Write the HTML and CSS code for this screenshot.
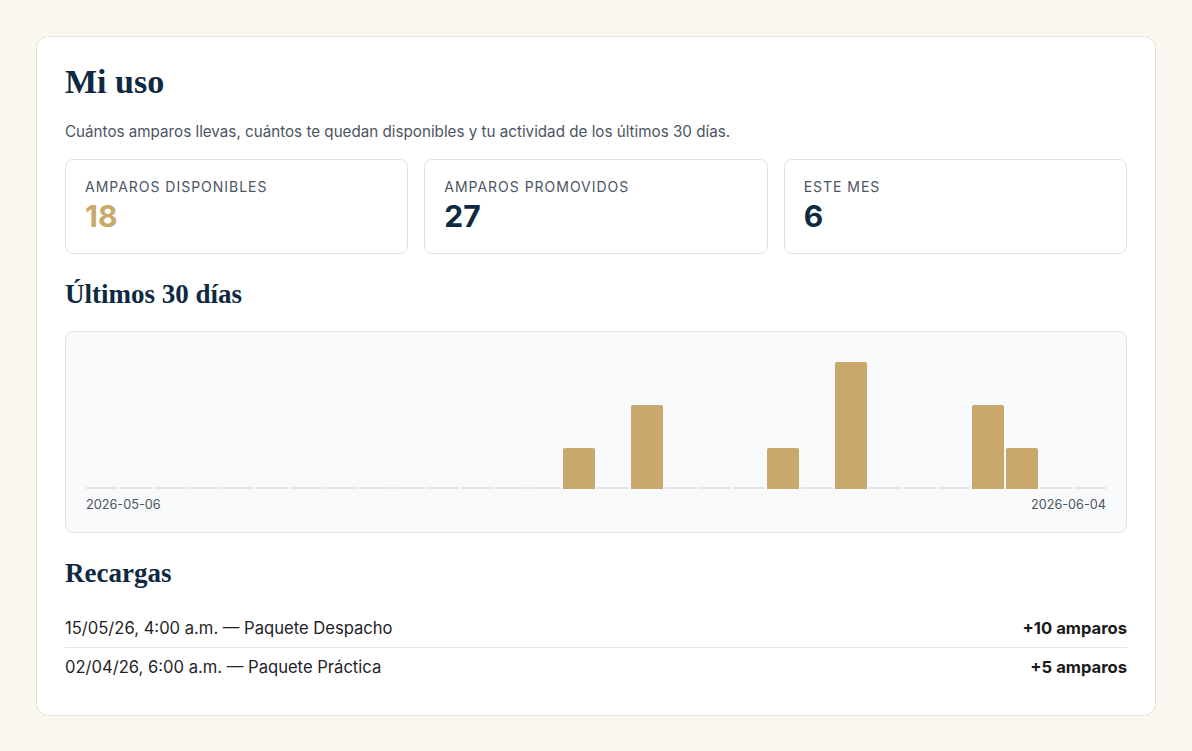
FILE: index.html
```html
<!DOCTYPE html>
<html lang="es">

<head>
    <meta charset="UTF-8">
    <meta name="viewport" content="width=device-width, initial-scale=1.0">
    <title>Mi uso</title>
    <link rel="stylesheet" href="styles.css">
</head>

<body>
    <div class="card">
        <h1>Mi uso</h1>
        <p class="intro">Cuántos amparos llevas, cuántos te quedan disponibles y tu actividad de los últimos 30 días.</p>

        <div class="stats">
            <div class="stat">
                <div class="stat-label">Amparos disponibles</div>
                <div class="stat-value gold">18</div>
            </div>
            <div class="stat">
                <div class="stat-label">Amparos promovidos</div>
                <div class="stat-value">27</div>
            </div>
            <div class="stat">
                <div class="stat-label">Este mes</div>
                <div class="stat-value">6</div>
            </div>
        </div>

        <h2>Últimos 30 días</h2>
        <div class="chart">
            <div class="bars">
                <div class="bar empty"></div>
                <div class="bar empty"></div>
                <div class="bar empty"></div>
                <div class="bar empty"></div>
                <div class="bar empty"></div>
                <div class="bar empty"></div>
                <div class="bar empty"></div>
                <div class="bar empty"></div>
                <div class="bar empty"></div>
                <div class="bar empty"></div>
                <div class="bar empty"></div>
                <div class="bar empty"></div>
                <div class="bar empty"></div>
                <div class="bar empty"></div>
                <div class="bar" style="height: 41px"></div>
                <div class="bar empty"></div>
                <div class="bar" style="height: 84px"></div>
                <div class="bar empty"></div>
                <div class="bar empty"></div>
                <div class="bar empty"></div>
                <div class="bar" style="height: 41px"></div>
                <div class="bar empty"></div>
                <div class="bar" style="height: 127px"></div>
                <div class="bar empty"></div>
                <div class="bar empty"></div>
                <div class="bar empty"></div>
                <div class="bar" style="height: 84px"></div>
                <div class="bar" style="height: 41px"></div>
                <div class="bar empty"></div>
                <div class="bar empty"></div>
            </div>
            <div class="chart-dates">
                <span>2026-05-06</span>
                <span>2026-06-04</span>
            </div>
        </div>

        <h2>Recargas</h2>
        <ul class="recargas">
            <li>
                <span>15/05/26, 4:00 a.m. — Paquete Despacho</span>
                <strong>+10 amparos</strong>
            </li>
            <li>
                <span>02/04/26, 6:00 a.m. — Paquete Práctica</span>
                <strong>+5 amparos</strong>
            </li>
        </ul>
    </div>
</body>

</html>
```

FILE: styles.css
```css
body {
    font-family: Inter, "Liberation Sans", sans-serif;
    margin: 0;
    padding: 36px;
    background-color: #faf7f0;
    color: #1f2328;
}
.card {
    background-color: #fff;
    border: 1px solid #e6e1d6;
    border-radius: 12px;
    padding: 28px 28px 29px;
}
h1, h2 {
    font-family: "Liberation Serif", serif;
    font-weight: bold;
    color: #0f2942;
    margin: 0;
}
h1 {
    font-size: 34px;
    line-height: 34px;
}
h2 {
    font-size: 27px;
    line-height: 34px;
    margin: 23px 0 20px;
}
.intro {
    margin: 23px 0 17px;
    font-size: 15.2px;
    line-height: 20px;
    color: #4b5563;
}
.stats {
    display: grid;
    grid-template-columns: repeat(3, 1fr);
    gap: 16px;
}
.stat {
    border: 1px solid #e5e0d4;
    border-radius: 8px;
    padding: 18px 19px 19px;
}
.stat-label {
    font-size: 14px;
    line-height: 18px;
    letter-spacing: 0.07em;
    text-transform: uppercase;
    color: #4b5563;
}
.stat-value {
    margin-top: 2px;
    font-size: 30px;
    line-height: 36px;
    font-weight: 700;
    color: #0f2942;
}
.stat-value.gold {
    color: #c8a86b;
}
.chart {
    background-color: #f8fafc;
    border: 1px solid #e5e1d6;
    border-radius: 8px;
    padding: 20px 20px 19px;
}
.bars {
    display: flex;
    align-items: flex-end;
    gap: 2px;
    height: 137px;
}
.bar {
    flex: 1;
    background-color: #c8a86b;
    border-radius: 2px 2px 0 0;
}
.bar.empty {
    height: 2px;
    background-color: #e3e5e9;
    border-radius: 0;
}
.chart-dates {
    display: flex;
    justify-content: space-between;
    margin-top: 8px;
    font-size: 12.7px;
    line-height: 16px;
    color: #4b5563;
}
.recargas {
    list-style: none;
    margin: -1px 0 0;
    padding: 0;
}
.recargas li {
    display: flex;
    justify-content: space-between;
    padding: 8px 0;
    font-size: 16.6px;
    line-height: 22px;
}
.recargas li + li {
    border-top: 1px solid #ebe6da;
}
.recargas strong {
    font-weight: 700;
    color: #1a1a1a;
}
```
